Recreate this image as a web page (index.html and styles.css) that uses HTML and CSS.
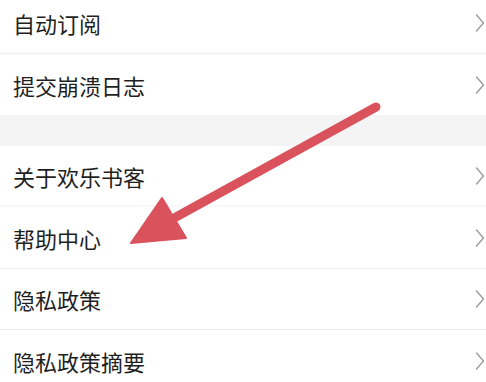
FILE: index.html
```html
<!DOCTYPE html>
<html lang="zh-CN">
<head>
<meta charset="utf-8">
<title>设置</title>
<link rel="stylesheet" href="styles.css">
</head>
<body>
<div class="page">
  <ul class="list">
    <li class="row row-first sep-soft"><span class="label">自动订阅</span><svg class="chev" viewBox="0 0 10 18"><polyline points="1.5,1 8.5,9 1.5,17"/></svg></li>
    <li class="row row-second"><span class="label">提交崩溃日志</span><svg class="chev" viewBox="0 0 10 18"><polyline points="1.5,1 8.5,9 1.5,17"/></svg></li>
  </ul>
  <div class="gap"></div>
  <ul class="list">
    <li class="row row-third sep-faint"><span class="label">关于欢乐书客</span><svg class="chev" viewBox="0 0 10 18"><polyline points="1.5,1 8.5,9 1.5,17"/></svg></li>
    <li class="row row-fourth sep-line"><span class="label">帮助中心</span><svg class="chev" viewBox="0 0 10 18"><polyline points="1.5,1 8.5,9 1.5,17"/></svg></li>
    <li class="row row-fifth sep-line"><span class="label">隐私政策</span><svg class="chev" viewBox="0 0 10 18"><polyline points="1.5,1 8.5,9 1.5,17"/></svg></li>
    <li class="row row-sixth"><span class="label">隐私政策摘要</span><svg class="chev" viewBox="0 0 10 18"><polyline points="1.5,1 8.5,9 1.5,17"/></svg></li>
  </ul>
  <svg class="arrow" viewBox="0 0 486 382" width="486" height="382">
    <line x1="376" y1="107" x2="176" y2="217" />
    <polygon points="131,243 162,198 186,238" />
  </svg>
</div>
</body>
</html>
```

FILE: styles.css
```css
html, body {
  margin: 0;
  padding: 0;
  background: #ffffff;
}
body {
  width: 486px;
  height: 382px;
  overflow: hidden;
  font-family: "Noto Sans CJK SC", "Noto Sans", sans-serif;
}
.page {
  position: relative;
  width: 486px;
  height: 382px;
  overflow: hidden;
}
.list {
  list-style: none;
  margin: 0;
  padding: 0;
  background: #ffffff;
}
.row {
  display: flex;
  align-items: center;
  justify-content: space-between;
  padding: 0 1px 0 13px;
  box-sizing: border-box;
}
.label {
  font-size: 22px;
  line-height: 1;
  color: #1f1f1f;
}
.chev {
  width: 10px;
  height: 18px;
  flex: none;
}
.chev polyline {
  fill: none;
  stroke: #9b9b9b;
  stroke-width: 1.4;
  stroke-linecap: round;
  stroke-linejoin: round;
}
.row-first { height: 55px; padding-bottom: 6px; }
.row-second { height: 60px; }
.row-third { height: 61px; }
.row-fourth { height: 62px; }
.row-fifth { height: 61px; }
.row-sixth { height: 62px; }
.sep-soft { border-bottom: 3px solid #f6f6f6; }
.sep-faint { border-bottom: 2px solid #f8f8f8; }
.sep-line { border-bottom: 1px solid #ececec; }
.gap {
  height: 31px;
  background: #f4f4f4;
}
.arrow {
  position: absolute;
  left: 0;
  top: 0;
  pointer-events: none;
}
.arrow line {
  stroke: #d9525c;
  stroke-width: 9;
  stroke-linecap: round;
}
.arrow polygon {
  fill: #d9525c;
  stroke: #d9525c;
  stroke-width: 2;
  stroke-linejoin: round;
}
```
